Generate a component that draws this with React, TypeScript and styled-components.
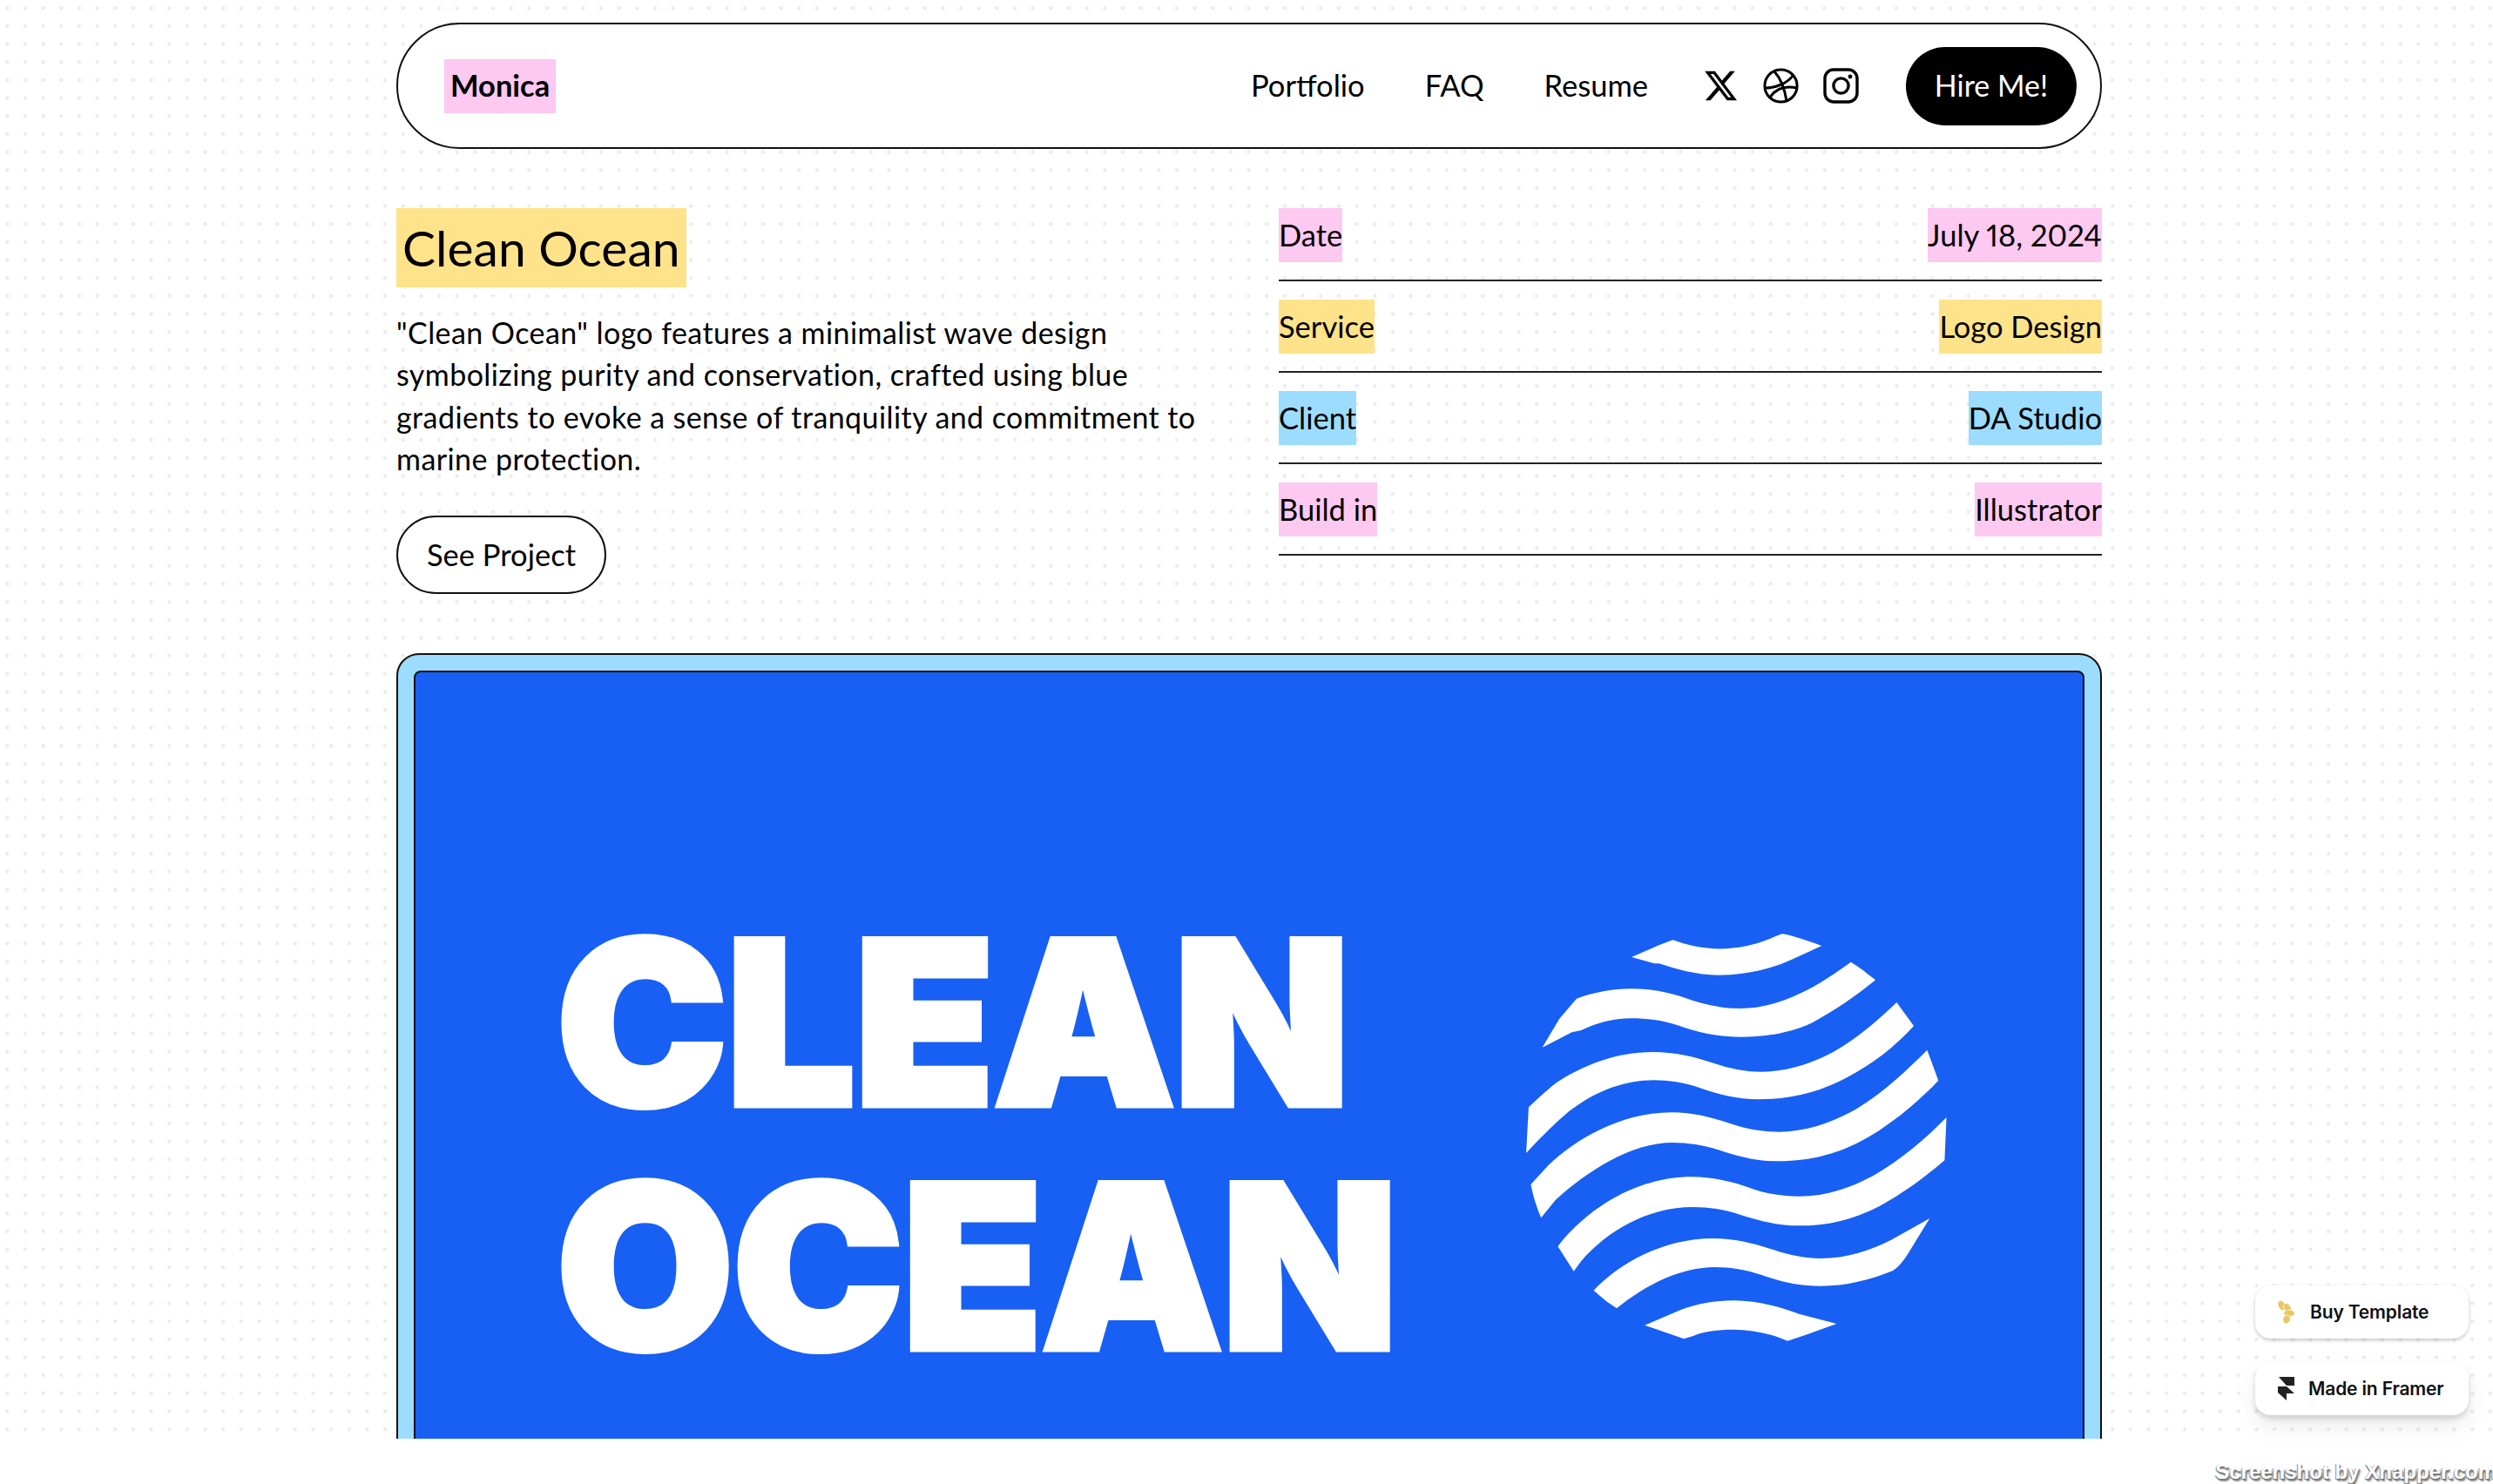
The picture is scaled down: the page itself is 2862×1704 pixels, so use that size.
import styled, { createGlobalStyle } from "styled-components";
import { FaXTwitter } from "react-icons/fa6";

const GlobalStyle = createGlobalStyle`
  html, body {
    margin: 0;
    padding: 0;
    background: #fff;
  }
  body {
    font-family: Lato, "Noto Sans", sans-serif;
    color: #000;
  }
`;

const Screen = styled.div`
  position: relative;
  width: 2862px;
  height: 1704px;
  overflow: hidden;
`;

const Page = styled.main`
  height: 1652px;
  overflow: hidden;
  box-sizing: border-box;
  padding: 26px 0 0 455px;
  background-color: #fff;
  background-image: radial-gradient(circle, #ebebeb 1.8px, transparent 2.5px);
  background-size: 20.67px 20.67px;
  background-position: -2px -1px;
`;

const Column = styled.div`
  width: 1958px;
`;

const Nav = styled.nav`
  box-sizing: border-box;
  height: 145px;
  display: flex;
  align-items: center;
  padding: 0 27px 0 53px;
  background: #fff;
  border: 2px solid #111;
  border-radius: 73px;
`;

const Logo = styled.div`
  height: 62px;
  padding: 0 7px 2px;
  box-sizing: border-box;
  display: flex;
  align-items: center;
  background: #fdc9f1;
  font-size: 34.5px;
  font-weight: 700;
`;

const NavLinks = styled.div`
  margin-left: auto;
  display: flex;
  align-items: center;
  gap: 69px;
  padding-bottom: 2px;
`;

const NavLink = styled.a`
  font-size: 34.5px;
`;

const Socials = styled.div`
  margin-left: 63px;
  display: flex;
  align-items: center;
  gap: 28px;
  svg {
    display: block;
    width: 41px;
    height: 41px;
  }
`;

const HireButton = styled.a`
  margin-left: 54px;
  width: 196px;
  height: 90px;
  padding-bottom: 2px;
  box-sizing: border-box;
  display: flex;
  align-items: center;
  justify-content: center;
  background: #000;
  color: #fff;
  border-radius: 45px;
  font-size: 34px;
`;

const Intro = styled.section`
  margin-top: 68px;
  display: grid;
  grid-template-columns: 945px 945px;
  justify-content: space-between;
  align-items: start;
`;

const Title = styled.h1`
  display: inline-block;
  margin: 0;
  padding: 0 7px;
  height: 91px;
  line-height: 91px;
  background: #ffe38a;
  font-size: 57px;
  font-weight: 400;
`;

const Description = styled.p`
  margin: 28px 0 0;
  width: 925px;
  font-size: 34px;
  line-height: 48.4px;
  letter-spacing: 0.42px;
`;

const ProjectButton = styled.a`
  box-sizing: border-box;
  margin-top: 40px;
  width: 241px;
  height: 90px;
  display: flex;
  align-items: center;
  justify-content: center;
  background: #fff;
  border: 2px solid #111;
  border-radius: 45px;
  font-size: 34.5px;
`;

const Details = styled.dl`
  margin: 0;
  display: flex;
  flex-direction: column;
  gap: 21px;
`;

const DetailRow = styled.div`
  display: flex;
  justify-content: space-between;
  padding-bottom: 20px;
  border-bottom: 2px solid #222;
`;

const tagColors = {
  pink: "#fdc9f1",
  yellow: "#ffe38a",
  blue: "#9cdcff",
};

const Tag = styled.span<{ $tone: keyof typeof tagColors }>`
  height: 62px;
  line-height: 62px;
  margin: 0;
  background: ${(props) => tagColors[props.$tone]};
  font-size: 34.5px;
  font-variant-numeric: proportional-nums;
`;

const Card = styled.section`
  box-sizing: border-box;
  margin-top: 68px;
  height: 960px;
  padding: 18px 18px 0;
  background: #9cdcff;
  border: 2.5px solid #111;
  border-radius: 26px;
`;

const CardArt = styled.div`
  box-sizing: border-box;
  height: 1000px;
  display: flex;
  padding: 300px 0 0 162px;
  background: #1860f3;
  border: 2.5px solid #111;
  border-radius: 8px;
`;

const ArtTitle = styled.div`
  width: 1113px;
  color: #fff;
  font-family: Inter, sans-serif;
  font-size: 262px;
  font-weight: 900;
  line-height: 280px;
  letter-spacing: -1px;
  -webkit-text-stroke: 7px #fff;
  margin-top: -38px;
`;

const WaveLogo = styled.svg`
  width: 560px;
  height: 520px;
  margin: -34px 0 0 -51px;
  flex: none;
`;

const Floating = styled.aside`
  position: absolute;
  left: 2589px;
  top: 1476px;
  display: flex;
  flex-direction: column;
  gap: 27px;
`;

const FloatingButton = styled.a<{ $lift?: boolean; $gap: number }>`
  box-sizing: border-box;
  width: 245px;
  height: 61px;
  display: flex;
  align-items: center;
  gap: ${(props) => props.$gap}px;
  padding-left: 26px;
  background: #fff;
  border-radius: 18px;
  color: #111;
  font-family: Inter, sans-serif;
  font-size: 21px;
  font-weight: 600;
  letter-spacing: -0.15px;
  box-shadow: ${(props) =>
    props.$lift
      ? "0 4px 6px rgba(0,0,0,0.14), 0 14px 26px rgba(0,0,0,0.07)"
      : "0 2px 4px rgba(0,0,0,0.22)"};
`;

const Watermark = styled.div`
  position: absolute;
  right: -4px;
  top: 1676px;
  color: #fff;
  font-family: "Liberation Sans", sans-serif;
  font-size: 24px;
  font-weight: 700;
  white-space: nowrap;
  text-shadow: 1px 2px 1px #777, -1px 1px 1px #888, 2px 3px 2px #999;
`;

const DribbbleIcon = () => (
  <svg viewBox="0 0 41 41" fill="none" stroke="#000" strokeWidth="3">
    <circle cx="20.5" cy="20.5" r="18.6" />
    <path d="M13 4C20 12 25 24 27 38" />
    <path d="M2.5 23C14 23 28 18 35 8" />
    <path d="M8 34C14 24 25 20 39 23" />
  </svg>
);

const InstagramIcon = () => (
  <svg viewBox="0 0 41 41" fill="none" stroke="#000" strokeWidth="3.4">
    <rect x="2" y="2" width="37" height="37" rx="10" />
    <circle cx="20.5" cy="20.5" r="8.6" />
    <circle cx="31" cy="10" r="2.4" fill="#000" stroke="none" />
  </svg>
);

const BeeIcon = () => (
  <svg width="20" height="27" viewBox="0 0 20 27" fill="#e8c662" stroke="#fff" strokeWidth="0.7">
    <ellipse cx="4.5" cy="6" rx="4" ry="6" transform="rotate(-25 4.5 6)" />
    <ellipse cx="11" cy="9" rx="4" ry="6" transform="rotate(-30 11 9)" />
    <ellipse cx="13" cy="15" rx="6.3" ry="3.8" />
    <ellipse cx="10" cy="22" rx="4.2" ry="5" transform="rotate(20 10 22)" />
  </svg>
);

const FramerIcon = () => (
  <svg width="19" height="27" viewBox="0 0 19 27" fill="#222">
    <path d="M1 0H19V10H10L1 0Z" />
    <path d="M0 11H10L19 19H10V27L0 18V11Z" />
  </svg>
);

// traced from the artwork, coordinates are the crop's 1568x1560 grid
const waves = [
  "M482 183L570 142L614 124C680 150 760 165 850 145C900 135 935 115 965 103C1000 108 1050 128 1093 144L1000 190C920 230 830 245 760 245C690 245 630 225 570 205L555 205Z",
  "M195 494L250 395L305 326C360 305 420 292 480 292C560 292 620 310 680 333C730 350 780 360 830 360C900 360 960 340 1020 310C1090 275 1140 235 1187 200C1215 218 1240 240 1266 262C1200 320 1130 370 1060 410C990 445 910 458 830 458C750 458 690 440 630 418C580 400 530 394 480 394C420 394 370 410 320 435L290 442Z",
  "M151 700C180 670 210 640 245 612C330 555 430 510 550 510C620 510 680 525 745 548C800 568 850 578 900 578C980 578 1060 550 1130 510C1210 460 1270 405 1334 339L1389 420C1330 490 1260 550 1170 600C1090 645 1000 673 890 673C820 673 760 655 700 633C650 615 600 607 555 607C450 607 360 650 280 715C230 760 185 810 143 858Z",
  "M158 966L212 903C290 820 440 718 610 718C680 718 740 735 800 757C850 775 900 785 955 785C1040 785 1120 755 1190 715C1280 660 1360 580 1432 503L1468 608C1400 685 1320 755 1240 805C1150 860 1060 886 955 886C880 886 820 868 765 848C710 830 660 822 615 822C480 822 340 920 237 1020L191 1081C175 1040 165 1005 158 966Z",
  "M245 1180C330 1060 490 940 675 940C740 940 800 955 860 977C910 997 960 1007 1020 1007C1110 1007 1190 975 1260 935C1350 880 1425 810 1494 735L1488 883C1420 945 1350 1000 1280 1040C1190 1090 1110 1108 1020 1108C950 1108 890 1090 830 1070C780 1052 730 1044 680 1044C530 1044 400 1130 320 1230L296 1265Z",
  "M360 1331C440 1240 580 1152 745 1152C810 1152 880 1170 940 1192C990 1210 1040 1221 1090 1221C1170 1221 1250 1195 1320 1155L1440 1083L1370 1205C1355 1230 1340 1250 1322 1263C1250 1295 1170 1316 1090 1316C1020 1316 960 1300 900 1278C850 1260 800 1251 750 1251C640 1251 530 1310 434 1393L400 1368Z",
  "M524 1451L640 1398C690 1378 750 1366 810 1366C880 1366 950 1385 1020 1412L1141 1446L1040 1485L983 1505C930 1480 870 1466 810 1466C760 1466 710 1472 680 1488L650 1498Z",
];

const details: { label: string; value: string; tone: keyof typeof tagColors }[] = [
  { label: "Date", value: "July 18, 2024", tone: "pink" },
  { label: "Service", value: "Logo Design", tone: "yellow" },
  { label: "Client", value: "DA Studio", tone: "blue" },
  { label: "Build in", value: "Illustrator", tone: "pink" },
];

export default function App() {
  return (
    <Screen>
      <GlobalStyle />
      <Page>
        <Column>
          <Nav>
            <Logo>Monica</Logo>
            <NavLinks>
              <NavLink>Portfolio</NavLink>
              <NavLink>FAQ</NavLink>
              <NavLink>Resume</NavLink>
            </NavLinks>
            <Socials>
              <FaXTwitter />
              <DribbbleIcon />
              <InstagramIcon />
            </Socials>
            <HireButton>Hire Me!</HireButton>
          </Nav>

          <Intro>
            <div>
              <Title>Clean Ocean</Title>
              <Description>
                "Clean Ocean" logo features a minimalist wave design symbolizing purity and
                conservation, crafted using blue gradients to evoke a sense of tranquility and
                commitment to marine protection.
              </Description>
              <ProjectButton>See Project</ProjectButton>
            </div>
            <Details>
              {details.map((row) => (
                <DetailRow key={row.label}>
                  <Tag as="dt" $tone={row.tone}>
                    {row.label}
                  </Tag>
                  <Tag as="dd" $tone={row.tone}>
                    {row.value}
                  </Tag>
                </DetailRow>
              ))}
            </Details>
          </Intro>

          <Card>
            <CardArt>
              <ArtTitle>
                CLEAN
                <br />
                OCEAN
              </ArtTitle>
              <WaveLogo viewBox="0 0 1568 1560" preserveAspectRatio="none" fill="#fff">
                {waves.map((d) => (
                  <path key={d} d={d} />
                ))}
              </WaveLogo>
            </CardArt>
          </Card>
        </Column>
      </Page>

      <Floating>
        <FloatingButton $gap={17}>
          <BeeIcon />
          Buy Template
        </FloatingButton>
        <FloatingButton $gap={16} $lift>
          <FramerIcon />
          Made in Framer
        </FloatingButton>
      </Floating>
      <Watermark>Screenshot by Xnapper.com</Watermark>
    </Screen>
  );
}
